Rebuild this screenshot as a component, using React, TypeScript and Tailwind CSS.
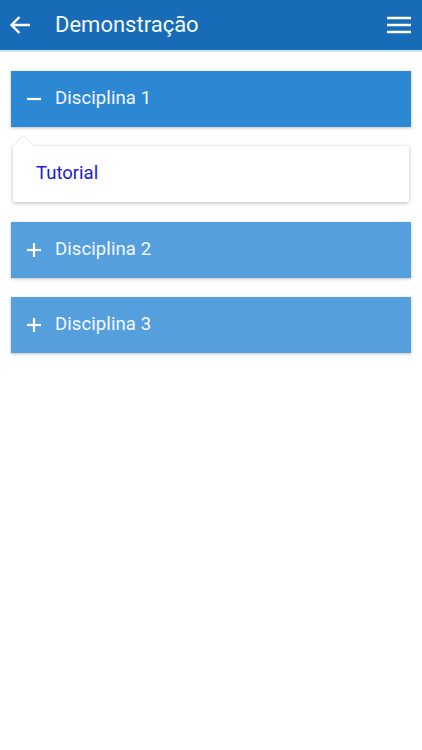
import React, { useState } from 'react';

interface Section {
    title: string;
    items: string[];
}

const sections: Section[] = [
    { title: 'Disciplina 1', items: ['Tutorial'] },
    { title: 'Disciplina 2', items: [] },
    { title: 'Disciplina 3', items: [] },
];

const AccordionItem = ({
    section,
    open,
    toggle,
}: {
    section: Section;
    open: boolean;
    toggle: () => void;
}) => (
    <div className="flex flex-col">
        <button
            type="button"
            onClick={toggle}
            className={`flex h-[56px] items-center gap-[13px] pl-[15px] text-left text-white shadow-[0_1px_3px_rgba(0,0,0,0.25)] ${
                open ? 'bg-[#2d88d4]' : 'bg-[#559fdc]'
            }`}
        >
            <svg width="16" height="16" viewBox="0 0 16 16">
                <path d="M1 8h14" stroke="white" strokeWidth="2.2" />
                {!open && <path d="M8 1v14" stroke="white" strokeWidth="2.2" />}
            </svg>
            <span className="text-[18.5px] tracking-[0.1px] text-[#f4f9ff]">{section.title}</span>
        </button>
        {open && (
            <div className="relative mx-[2px] mb-[1px] mt-[19px] bg-white shadow-[0_1px_4px_rgba(0,0,0,0.28)]">
                {/* little pointer on top of the card */}
                <svg
                    width="26"
                    height="13"
                    viewBox="0 0 26 13"
                    className="absolute left-[-1px] top-[-12px]"
                >
                    <path d="M0.5 13 L11 1.5 L23 13" fill="white" stroke="#e4e4e4" strokeWidth="1" />
                    <rect x="1" y="12" width="24" height="2" fill="white" />
                </svg>
                <div className="flex h-[56px] items-center pl-[23px]">
                    {section.items.map((item) => (
                        <a key={item} className="text-[18.5px] text-[#1a1ad0]">
                            {item}
                        </a>
                    ))}
                </div>
            </div>
        )}
    </div>
);

export default function App() {
    const [openIndex, setOpenIndex] = useState<number | null>(0);

    return (
        <div className="flex min-h-[750px] w-[422px] flex-col bg-white font-['Roboto',sans-serif]">
            <header className="flex h-[50px] items-center justify-between bg-[#176bb7] pl-[9px] pr-[11px] text-white">
                <div className="flex items-center gap-[24px]">
                    <svg width="22" height="20" viewBox="0 0 22 20" fill="none">
                        <path d="M21 10H3M10.5 2L2.5 10l8 8" stroke="white" strokeWidth="2.4" />
                    </svg>
                    <h1 className="text-[22px] leading-none text-[#f4f8ff]">Demonstração</h1>
                </div>
                <svg width="24" height="18" viewBox="0 0 24 18">
                    <path d="M0 2h24M0 9h24M0 16h24" stroke="white" strokeWidth="2.4" />
                </svg>
            </header>
            <div className="h-[2px] bg-[#c9e6fa]" />
            <main className="flex flex-col gap-[19px] px-[11px] pt-[19px]">
                {sections.map((s, i) => (
                    <AccordionItem
                        key={s.title}
                        section={s}
                        open={openIndex === i}
                        toggle={() => setOpenIndex(openIndex === i ? null : i)}
                    />
                ))}
            </main>
        </div>
    );
}
